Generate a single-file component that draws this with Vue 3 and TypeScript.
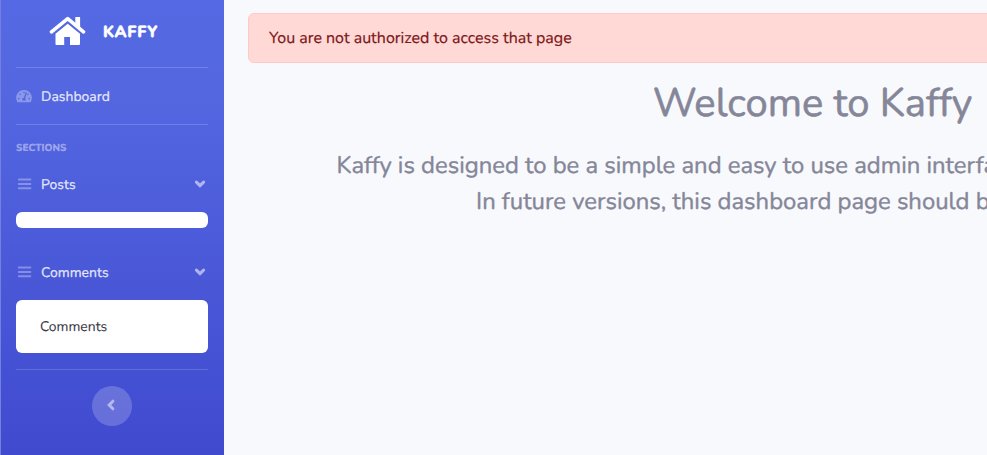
<script setup lang="ts">
interface Section {
  name: string
  items: string[]
}

const sections: Section[] = [
  { name: 'Posts', items: [] },
  { name: 'Comments', items: ['Comments'] },
]
</script>

<template>
  <div class="layout">
    <nav class="sidebar">
      <a class="brand">
        <svg class="brand-icon" viewBox="0 0 38 30">
          <path d="M2.5 15.8 18.7 2.6l15.8 13.2" fill="none" stroke="#fff" stroke-width="3.6" stroke-linecap="round" stroke-linejoin="round" />
          <path d="M26.3 1h4.8v11.5l-4.8-4z" fill="#fff" />
          <path d="M6.5 17.7 18.7 7.8l12.3 9.9V28q0 1-1 1h-9V21h-5.8v8H7.5q-1 0-1-1z" fill="#fff" />
        </svg>
        <span class="brand-text">KAFFY</span>
      </a>
      <hr class="divider" />
      <a class="nav-link dashboard">
        <svg class="gauge" viewBox="0 0 576 512">
          <path fill="currentColor" d="M288 32C128.94 32 0 160.94 0 320c0 52.8 14.25 102.26 39.06 144.8 5.61 9.62 16.3 15.2 27.44 15.2h443c11.14 0 21.83-5.58 27.44-15.2C561.75 422.26 576 372.8 576 320c0-159.06-128.94-288-288-288zm0 64c14.71 0 26.58 10.13 30.32 23.65-1.11 2.26-2.64 4.23-3.45 6.67l-9.22 27.67c-5.13 3.49-10.97 6.01-17.64 6.01-17.67 0-32-14.33-32-32S270.33 96 288 96zM96 384c-17.67 0-32-14.33-32-32s14.33-32 32-32 32 14.33 32 32-14.33 32-32 32zm48-160c-17.67 0-32-14.33-32-32s14.33-32 32-32 32 14.33 32 32-14.33 32-32 32zm246.77-72.41l-61.33 184C343.13 347.33 352 364.54 352 384c0 11.72-3.38 22.55-8.88 32H232.88c-5.5-9.45-8.88-20.28-8.88-32 0-33.94 26.5-61.43 59.9-63.59l61.34-184.01c4.17-12.56 17.73-19.45 30.36-15.17 12.57 4.19 19.35 17.79 15.17 30.36zm14.66 57.2l15.52-46.55c3.47-1.29 7.13-2.23 11.05-2.23 17.67 0 32 14.33 32 32s-14.33 32-32 32c-11.38-.01-20.89-6.28-26.57-15.22zM480 384c-17.67 0-32-14.33-32-32s14.33-32 32-32 32 14.33 32 32-14.33 32-32 32z" />
        </svg>
        <span>Dashboard</span>
      </a>
      <hr class="divider" />
      <div class="heading"><span>SECTIONS</span></div>
      <div v-for="section in sections" :key="section.name" class="section">
        <a class="nav-link">
          <svg class="bars" viewBox="0 0 16 14">
            <path d="M2.8 2.5h11.6M2.8 7h11.6M2.8 11.3h11.6" stroke="currentColor" stroke-width="1.9" stroke-linecap="round" />
          </svg>
          <span>{{ section.name }}</span>
          <svg class="caret" viewBox="0 0 12 10">
            <path d="M2.4 3.1 6 6.6l3.6-3.5" fill="none" stroke="currentColor" stroke-width="3.1" stroke-linecap="round" stroke-linejoin="miter" />
          </svg>
        </a>
        <div class="submenu">
          <a v-for="item in section.items" :key="item" class="submenu-item">{{ item }}</a>
        </div>
      </div>
      <hr class="divider" />
      <button class="toggle" type="button" aria-label="Toggle sidebar">
        <svg class="toggle-icon" viewBox="0 0 10 12">
          <path d="M6.9 2.2 3.2 6l3.7 3.8" fill="none" stroke="currentColor" stroke-width="3" stroke-linecap="round" />
        </svg>
      </button>
    </nav>
    <main class="content">
      <div class="alert"><span>You are not authorized to access that page</span></div>
      <h1 class="title">Welcome to Kaffy</h1>
      <p class="lead lead-first">Kaffy is designed to be a simple and easy to use admin interface</p>
      <p class="lead lead-second">In future versions, this dashboard page should be</p>
    </main>
  </div>
</template>

<style>
body {
  margin: 0;
  overflow: hidden;
}
</style>

<style scoped>
.layout {
  display: flex;
  width: 100vw;
  height: 100vh;
  overflow: hidden;
  background: #f8f9fd;
  color: #858698;
  font-family: Nunito, Lato, "Open Sans", sans-serif;
  text-rendering: geometricPrecision;
  -webkit-text-stroke: 0.2px currentColor;
}
.sidebar {
  box-sizing: border-box;
  flex: 0 0 224px;
  height: 100vh;
  padding: 0 16px 0 15px;
  border-left: 1px solid #7380e2;
  background: linear-gradient(180deg, #5469e3 0%, #5467e1 20%, #404acf 100%);
  display: flex;
  flex-direction: column;
}
.brand {
  height: 67px;
  box-sizing: border-box;
  padding: 16px 0 0 33px;
  display: flex;
  align-items: flex-start;
  color: #fff;
}
.brand-icon {
  width: 38px;
  height: 30px;
}
.brand-text {
  margin-left: 16px;
  line-height: 32px;
  font-size: 16px;
  font-weight: 800;
  letter-spacing: 0.8px;
  -webkit-text-stroke-width: 0.5px;
}
.divider {
  flex: none;
  width: 100%;
  height: 1px;
  margin: 0;
  border: 0;
  background: rgba(255, 255, 255, 0.17);
}
.nav-link {
  display: flex;
  align-items: center;
  height: 56px;
  color: rgba(255, 255, 255, 0.8);
  font-size: 13.9px;
  font-weight: 500;
}
.nav-link span {
  margin-left: 9px;
}
.gauge,
.bars {
  width: 16px;
  height: 14px;
  color: rgba(255, 255, 255, 0.32);
}
.caret {
  width: 12px;
  height: 10px;
  margin-left: auto;
  margin-right: 2px;
  color: rgba(255, 255, 255, 0.55);
}
.heading {
  height: 31px;
  line-height: 46px;
  color: rgba(255, 255, 255, 0.42);
  font-size: 10px;
  font-weight: 800;
}
.submenu {
  margin-bottom: 16px;
  padding: 8px 0;
  border-radius: 6px;
  background: #fff;
}
.submenu-item {
  display: block;
  height: 37px;
  line-height: 37px;
  padding: 0 24px;
  color: #3a3b45;
  font-size: 13.9px;
  -webkit-text-stroke-width: 0.1px;
}
.toggle {
  width: 40px;
  height: 40px;
  margin: 16px auto 0;
  padding: 0 2px 2px 0;
  border: 0;
  border-radius: 50%;
  background: rgba(255, 255, 255, 0.2);
  color: rgba(255, 255, 255, 0.5);
  display: flex;
  align-items: center;
  justify-content: center;
}
.toggle-icon {
  width: 10px;
  height: 12px;
}
.content {
  flex: 1;
  min-width: 0;
  overflow: hidden;
  padding: 13px 0 0 24px;
}
.alert {
  box-sizing: border-box;
  width: 1128px;
  height: 50px;
  padding: 0 20px;
  border: 1px solid #ffc9c6;
  border-radius: 6px;
  background: #ffd9d6;
  color: #7e1518;
  font-size: 16px;
  line-height: 48px;
}
.title {
  width: 1129px;
  margin: 17px 0 0;
  text-align: center;
  font-size: 40px;
  font-weight: 400;
  line-height: 48px;
  -webkit-text-stroke-width: 0.6px;
}
.lead {
  margin: 0;
  white-space: nowrap;
  font-size: 23.88px;
  line-height: 36px;
  -webkit-text-stroke-width: 0.4px;
}
.lead-first {
  margin-top: 20px;
  padding-left: 88.5px;
}
.lead-second {
  padding-left: 228px;
}
</style>
